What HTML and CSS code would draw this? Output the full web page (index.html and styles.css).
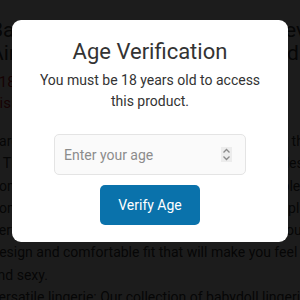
FILE: index.html
```html
<!DOCTYPE html>
<html lang="en">
<head>
<meta charset="utf-8">
<link rel="stylesheet" href="styles.css">
<title>Age Verification</title>
</head>
<body>
<main class="page">
  <h1 class="page-title">
    <span class="line">Babydoll Lingerie Collection for every mood</span>
    <span class="line">Air of elegance for every size and shape we love</span>
  </h1>
  <p class="notice">
    <span class="line">• 18+ only: adult content notice</span>
    <span class="line">Visible only to adult customers</span>
  </p>
  <div class="copy">
    <span class="line">Care instructions: hand wash cold and dry flat in the shade</span>
    <span class="line">y. The lingerie comes in a range of sizes and styles to fit a</span>
    <span class="line">Comfortable fabric made with soft and breathable material for a</span>
    <span class="line">Comfortable fit for all body types, from petite to plus size.</span>
    <span class="line">Perfect for any occasion, a gift or a treat, this is our top product</span>
    <span class="line">Design and comfortable fit that will make you feel confident</span>
    <span class="line">and sexy.</span>
    <span class="line">Versatile lingerie: Our collection of babydoll lingerie is wide</span>
  </div>
</main>

<div class="overlay">
  <div class="modal" role="dialog" aria-labelledby="age-title">
    <h2 class="modal-title" id="age-title">Age Verification</h2>
    <p class="modal-text">You must be 18 years old to access this product.</p>
    <div class="age-field">
      <input class="age-input" type="text" placeholder="Enter your age">
      <span class="spinner" aria-hidden="true">
        <svg width="11" height="15" viewBox="0 0 11 15">
          <path d="M2.5 5.5 L5.5 2.5 L8.5 5.5" fill="none" stroke="#8a8a8a" stroke-width="1.3"/>
          <path d="M2.5 9.5 L5.5 12.5 L8.5 9.5" fill="none" stroke="#8a8a8a" stroke-width="1.3"/>
        </svg>
      </span>
    </div>
    <button class="verify-btn" type="button">Verify Age</button>
  </div>
</div>
</body>
</html>
```
FILE: styles.css
```css
* { box-sizing: border-box; }

html, body {
  margin: 0;
  padding: 0;
  width: 300px;
  height: 300px;
  overflow: hidden;
  background: #ffffff;
  font-family: Roboto, "Liberation Sans", sans-serif;
}

.page {
  margin-left: -10px;
  width: 560px;
  padding-top: 19px;
  color: #3a3a3a;
}

.line {
  display: block;
  white-space: nowrap;
}

.page-title {
  margin: 0;
  font-size: 21px;
  font-weight: 400;
  line-height: 23px;
}

.notice {
  margin: 7px 0 0;
  font-size: 15px;
  line-height: 21px;
  color: #c4161c;
}

.copy {
  margin-top: 16px;
  font-size: 14px;
  line-height: 22.3px;
}

.overlay {
  position: fixed;
  inset: 0;
  background: rgba(0, 0, 0, 0.89);
  display: flex;
  justify-content: center;
  align-items: flex-start;
  padding-top: 20px;
}

.modal {
  width: 276px;
  background: #ffffff;
  border-radius: 9px;
  padding: 19px 20px 17px;
  display: flex;
  flex-direction: column;
  align-items: center;
  text-align: center;
}

.modal-title {
  margin: 0;
  font-size: 22px;
  font-weight: 400;
  color: #333;
  line-height: 26px;
}

.modal-text {
  margin: 5px 0 0;
  font-size: 14px;
  line-height: 21px;
  color: #333;
}

.age-field {
  margin-top: 22px;
  width: 192px;
  height: 41px;
  border: 1px solid #e4e4e4;
  border-radius: 5px;
  background: #fafafa;
  display: flex;
  align-items: center;
  padding: 0 13px 0 9px;
}

.age-input {
  flex: 1;
  min-width: 0;
  border: 0;
  background: transparent;
  font-family: inherit;
  font-size: 14px;
  color: #333;
  padding: 0;
  outline: none;
}

.age-input::placeholder {
  color: #8c8c8c;
}

.spinner {
  width: 11px;
  height: 15px;
  background: #ececec;
  display: flex;
  align-items: center;
  justify-content: center;
}

.verify-btn {
  margin-top: 10px;
  width: 100px;
  height: 40px;
  border: 0;
  border-radius: 5px;
  background: #0a72ab;
  color: #ffffff;
  font-family: inherit;
  font-size: 14px;
  padding: 0;
}
```
